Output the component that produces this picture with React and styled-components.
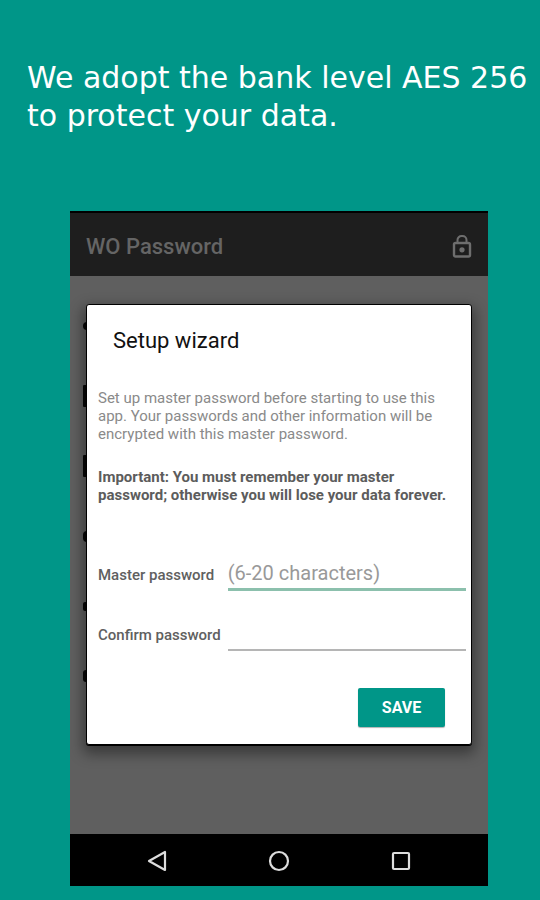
import React from "react";
import styled, { createGlobalStyle } from "styled-components";

const teal = "#009688";

const GlobalStyle = createGlobalStyle`
  *, *::before, *::after { box-sizing: border-box; }
  body {
    margin: 0;
    background: ${teal};
    font-family: Roboto, "Liberation Sans", sans-serif;
  }
`;

const Page = styled.main`
  min-height: 100vh;
  padding: 59px 0 14px;
  background: ${teal};
`;

const Headline = styled.h1`
  margin: 0 0 76px;
  padding-left: 27px;
  color: #fff;
  font: 400 30px/38px "DejaVu Sans", sans-serif;
`;

const Phone = styled.section`
  display: flex;
  flex-direction: column;
  margin: 0 52px 0 70px;
`;

const AppBar = styled.header`
  display: flex;
  align-items: center;
  justify-content: space-between;
  height: 65px;
  padding: 5px 16px 0;
  background: #1e1e1e;
  border-top: 2px solid #000;
`;

const AppTitle = styled.h2`
  margin: 0;
  color: #656565;
  font-size: 22px;
  line-height: 28px;
  font-weight: 500;
`;

const LockButton = styled.button`
  display: flex;
  padding: 0;
  border: 0;
  background: none;
  color: #6e6e6e;
`;

const Screen = styled.div`
  display: grid;
  min-height: 558px;
  background: #5f5f5f;
  overflow: hidden;
`;

const Backdrop = styled.ul`
  grid-area: 1 / 1;
  display: flex;
  flex-direction: column;
  margin: 0;
  padding: 15px 13px 0;
  list-style: none;
`;

const BackdropRow = styled.li`
  display: flex;
  align-items: center;
  height: 70px;
`;

const RowMark = styled.span`
  width: 24px;
  height: ${(p) => p.$height}px;
  border-radius: ${(p) => p.$radius}px;
  background: #080808;
`;

const Dialog = styled.form`
  grid-area: 1 / 1;
  z-index: 1;
  align-self: start;
  display: flex;
  flex-direction: column;
  margin: 28px 16px 0;
  padding: 22px 5px 17px 11px;
  border: 1px solid #000;
  border-radius: 3px;
  background: #fff;
  box-shadow: 0 1px 0 0 #000, 0 6px 14px 3px rgba(0, 0, 0, 0.4);
`;

const DialogTitle = styled.h3`
  margin: 0 0 34px 15px;
  color: #111;
  font-size: 22px;
  line-height: 28px;
  font-weight: 400;
`;

const Paragraph = styled.p`
  margin: 0 0 25px;
  color: ${(p) => (p.$strong ? "#5c5c5c" : "#8a8a8a")};
  font-size: 15px;
  line-height: 18px;
  font-weight: ${(p) => (p.$strong ? 700 : 400)};
`;

const Fields = styled.div`
  display: grid;
  grid-template-columns: auto 1fr;
  column-gap: 7px;
  row-gap: 24px;
  align-items: end;
  margin-top: 26px;
`;

const Label = styled.label`
  padding-bottom: 7px;
  color: #606060;
  font-size: 15px;
  line-height: 18px;
  font-weight: 500;
`;

const TextField = styled.input`
  width: 100%;
  min-width: 0;
  height: 36px;
  padding: 3px 0 0;
  border: 0;
  border-bottom: ${(p) => (p.$active ? "3px solid #8cc0ad" : "2px solid #b5b5b5")};
  border-radius: 0;
  outline: 0;
  background: none;
  color: #333;
  font: 400 20px/24px Roboto, sans-serif;
  &::placeholder { color: #999; opacity: 1; }
`;

const SaveButton = styled.button`
  align-self: flex-end;
  width: 87px;
  height: 39px;
  margin: 37px 21px 0 0;
  border: 0;
  border-radius: 2px;
  background: ${teal};
  box-shadow: 0 1px 1px rgba(0, 0, 0, 0.3);
  color: #fff;
  font: 700 16px/20px Roboto, sans-serif;
`;

const NavBar = styled.nav`
  display: flex;
  align-items: center;
  justify-content: center;
  gap: 98px;
  height: 52px;
  padding-top: 2px;
  background: #000;
`;

const NavButton = styled.button`
  display: flex;
  padding: 0;
  border: 0;
  background: none;
  color: #ddd;
`;

const marks = [
  { height: 8, radius: 4 },
  { height: 22, radius: 1 },
  { height: 22, radius: 1 },
  { height: 11, radius: 4 },
  { height: 9, radius: 2 },
  { height: 12, radius: 3 },
];

function LockIcon() {
  return (
    <svg width="20" height="26" viewBox="0 0 20 26" fill="none" stroke="currentColor" strokeWidth="2">
      <path d="M5.5 9V6a4 4 0 0 1 4-4h1a4 4 0 0 1 4 4v3" />
      <rect x="2" y="9" width="16" height="13.5" rx="1.5" strokeWidth="2.4" />
      <circle cx="10" cy="15.8" r="2.6" fill="currentColor" stroke="none" />
    </svg>
  );
}

function NavIcon({ children }) {
  return (
    <svg width="24" height="24" viewBox="0 0 24 24" fill="none" stroke="currentColor" strokeWidth="2.2" strokeLinejoin="round">
      {children}
    </svg>
  );
}

export default function App() {
  return (
    <>
      <GlobalStyle />
      <Page>
        <Headline>
          We adopt the bank level AES 256
          <br />
          to protect your data.
        </Headline>
        <Phone>
          <AppBar>
            <AppTitle>WO Password</AppTitle>
            <LockButton type="button" aria-label="Lock">
              <LockIcon />
            </LockButton>
          </AppBar>
          <Screen>
            <Backdrop aria-hidden="true">
              {marks.map((mark, i) => (
                <BackdropRow key={i}>
                  <RowMark $height={mark.height} $radius={mark.radius} />
                </BackdropRow>
              ))}
            </Backdrop>
            <Dialog onSubmit={(e) => e.preventDefault()}>
              <DialogTitle>Setup wizard</DialogTitle>
              <Paragraph>
                Set up master password before starting to use this app. Your
                passwords and other information will be encrypted with this
                master password.
              </Paragraph>
              <Paragraph $strong>
                Important: You must remember your master password; otherwise
                you will lose your data forever.
              </Paragraph>
              <Fields>
                <Label htmlFor="master">Master password</Label>
                <TextField id="master" type="password" placeholder="(6-20 characters)" $active />
                <Label htmlFor="confirm">Confirm password</Label>
                <TextField id="confirm" type="password" />
              </Fields>
              <SaveButton type="submit">SAVE</SaveButton>
            </Dialog>
          </Screen>
          <NavBar>
            <NavButton type="button" aria-label="Back">
              <NavIcon>
                <path d="M20 3v18L4 12Z" />
              </NavIcon>
            </NavButton>
            <NavButton type="button" aria-label="Home">
              <NavIcon>
                <circle cx="12" cy="12" r="9" />
              </NavIcon>
            </NavButton>
            <NavButton type="button" aria-label="Recent apps">
              <NavIcon>
                <rect x="4" y="4" width="16" height="16" rx="1" />
              </NavIcon>
            </NavButton>
          </NavBar>
        </Phone>
      </Page>
    </>
  );
}
